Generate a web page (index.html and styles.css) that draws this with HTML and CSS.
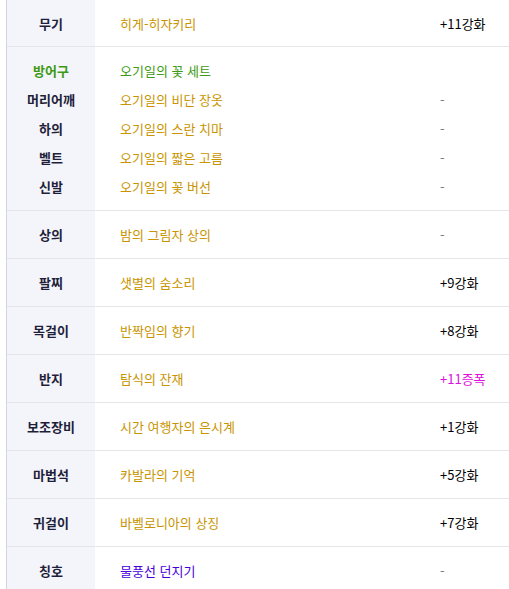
FILE: index.html
```html
<!DOCTYPE html>
<html lang="ko">
<head>
    <meta charset="UTF-8">
    <title>장비</title>
    <link rel="stylesheet" href="styles.css">
</head>
<body>
    <div class="equip-table">
        <div class="row">
            <div class="label">무기</div>
            <div class="item gold">히게-히자키리</div>
            <div class="value">+11강화</div>
        </div>

        <div class="row group">
            <div class="sub">
                <div class="label green">방어구</div>
                <div class="item green">오기일의 꽃 세트</div>
                <div class="value"></div>
            </div>
            <div class="sub">
                <div class="label">머리어깨</div>
                <div class="item gold">오기일의 비단 장옷</div>
                <div class="value none">-</div>
            </div>
            <div class="sub">
                <div class="label">하의</div>
                <div class="item gold">오기일의 스란 치마</div>
                <div class="value none">-</div>
            </div>
            <div class="sub">
                <div class="label">벨트</div>
                <div class="item gold">오기일의 짧은 고름</div>
                <div class="value none">-</div>
            </div>
            <div class="sub">
                <div class="label">신발</div>
                <div class="item gold">오기일의 꽃 버선</div>
                <div class="value none">-</div>
            </div>
        </div>

        <div class="row">
            <div class="label">상의</div>
            <div class="item gold">밤의 그림자 상의</div>
            <div class="value none">-</div>
        </div>
        <div class="row">
            <div class="label">팔찌</div>
            <div class="item gold">샛별의 숨소리</div>
            <div class="value">+9강화</div>
        </div>
        <div class="row">
            <div class="label">목걸이</div>
            <div class="item gold">반짝임의 향기</div>
            <div class="value">+8강화</div>
        </div>
        <div class="row">
            <div class="label">반지</div>
            <div class="item gold">탐식의 잔재</div>
            <div class="value amp">+11증폭</div>
        </div>
        <div class="row">
            <div class="label">보조장비</div>
            <div class="item gold">시간 여행자의 은시계</div>
            <div class="value">+1강화</div>
        </div>
        <div class="row">
            <div class="label">마법석</div>
            <div class="item gold">카발라의 기억</div>
            <div class="value">+5강화</div>
        </div>
        <div class="row">
            <div class="label">귀걸이</div>
            <div class="item gold">바벨로니아의 상징</div>
            <div class="value">+7강화</div>
        </div>
        <div class="row">
            <div class="label">칭호</div>
            <div class="item purple">물풍선 던지기</div>
            <div class="value none">-</div>
        </div>
    </div>
</body>
</html>
```

FILE: styles.css
```css
* {
    margin: 0;
    padding: 0;
    box-sizing: border-box;
}

body {
    background: #fff;
    font-family: "Noto Sans CJK KR", "Noto Sans", sans-serif;
    font-size: 13px;
    color: #000;
}

.equip-table {
    margin-left: 6px;
    border-left: 1px solid #d3d5dc;
    background: linear-gradient(to right, #f4f5fa 88px, #fff 88px);
}

.row,
.sub {
    display: grid;
    grid-template-columns: 88px 345px 1fr;
    align-items: center;
}

.row {
    height: 48px;
    border-bottom: 1px solid #e6e6ea;
}

.row:first-child {
    height: 47px;
}

.row.group {
    display: block;
    height: 164px;
    padding: 9px 0 10px;
}

.sub {
    height: 29px;
}

.label {
    text-align: center;
    font-weight: bold;
    color: #1f1f3b;
}

.item {
    padding-left: 25px;
}

.gold { color: #c99400; }
.green { color: #3d9a12; }
.purple { color: #4a00dd; }

.value.none { color: #777783; }
.value.amp { color: #dd11dd; }
```
